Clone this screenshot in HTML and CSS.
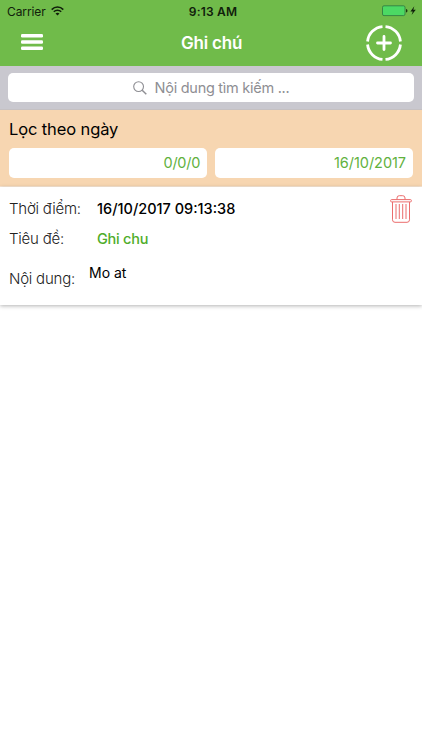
FILE: index.html
```html
<!DOCTYPE html>
<html lang="vi">
<head>
<meta charset="utf-8">
<title>Ghi chú</title>
<link rel="stylesheet" href="styles.css">
</head>
<body>
<header class="header">
  <div class="status">
    <div class="status-left">
      <span class="carrier">Carrier</span>
      <svg class="wifi" width="13" height="10" viewBox="0 0 13 10"><g fill="none" stroke="#10200b" stroke-width="1.6"><path d="M.7 3.6C4 .2 9 .2 12.3 3.6"/><path d="M2.8 5.8c2-2 5.4-2 7.4 0"/></g><path d="M4.500 7.400c1.200-1 2.800-1 4 0l-2 2.100z" fill="#10200b"/></svg>
    </div>
    <span class="clock">9:13 AM</span>
    <div class="status-right">
      <svg width="35" height="12" viewBox="0 0 35 12"><rect x=".5" y=".8" width="22.500" height="9.800" rx="1.500" fill="#4cd964" stroke="#2d7540" stroke-width=".8"/><path d="M24 4q1.500.2 1.500 1.700T24 7.400z" fill="#183510"/><path d="M32.300 1.300 28.400 6.500h2.400L29.600 10l4.200-5.300h-2.500z" fill="#10200b"/></svg>
    </div>
  </div>
  <nav class="navbar">
    <svg class="menu" width="22" height="16" viewBox="0 0 22 16"><g fill="#fff"><rect width="22" height="3.500" rx="1.200"/><rect y="6.200" width="22" height="3.500" rx="1.200"/><rect y="12.400" width="22" height="3.500" rx="1.200"/></g></svg>
    <h1 class="title">Ghi chú</h1>
    <svg class="add" width="36" height="36" viewBox="0 0 36 36"><g fill="none" stroke="#fff" stroke-width="2.800"><path d="M19.500 1.570A16.500 16.500 0 0 1 34.430 16.500M34.430 19.500A16.500 16.500 0 0 1 19.500 34.430M16.500 34.430A16.500 16.500 0 0 1 1.570 19.500M1.570 16.500A16.500 16.500 0 0 1 16.500 1.570"/><path d="M18 11.500v13M11.500 18h13" stroke-linecap="round"/></g></svg>
  </nav>
</header>
<div class="search">
  <div class="search-box">
    <svg width="14" height="14" viewBox="0 0 14 14" fill="none" stroke="#8e8e93" stroke-width="1.100"><circle cx="5.600" cy="5.600" r="4.900"/><path d="m9.200 9.200 4.100 4.100" stroke-width="1.500"/></svg>
    <span class="placeholder">Nội dung tìm kiếm ...</span>
  </div>
</div>
<section class="filter">
  <h2 class="filter-title">Lọc theo ngày</h2>
  <div class="dates">
    <div class="date"><span class="date-from">0/0/0</span></div>
    <div class="date"><span class="date-to">16/10/2017</span></div>
  </div>
</section>
<article class="note">
  <div class="fields">
    <div class="row"><span class="label label-time">Thời điểm:</span><span class="value time">16/10/2017 09:13:38</span></div>
    <div class="row"><span class="label label-title">Tiêu đề:</span><span class="value subject">Ghi chu</span></div>
    <div class="row row-body"><span class="label label-body">Nội dung:</span><span class="content">Mo at</span></div>
  </div>
  <svg class="trash" width="22" height="28" viewBox="0 0 22 28" fill="none" stroke="#eb6d6d" stroke-width="1"><rect x=".6" y="4.600" width="20.800" height="2.300" rx="1"/><path d="M7 4.500V3Q7 .7 9.300.7h3.400Q15 .7 15 3v1.500M2.500 7v17.800q0 2.500 2.500 2.500h12q2.500 0 2.500-2.500V7M6 9v15M9.300 9v15M12.700 9v15M16 9v15"/></svg>
</article>
</body>
</html>
```
FILE: styles.css
```css
* { box-sizing: border-box; }
body { margin: 0; min-height: 750px; background: #fff; color: #000; font-family: Inter, "Noto Sans", sans-serif; }
svg { display: block; flex: none; }
span, h1, h2 { white-space: nowrap; }
h1, h2 { margin: 0; }
.header { height: 66px; background: #70bb4a; }
.status { height: 22px; display: grid; grid-template-columns: 1fr auto 1fr; align-items: center; padding: 0 5px 0 7px; color: #10200b; font-size: 12px; }
.status-left { display: flex; align-items: center; gap: 5px; }
.carrier { letter-spacing: -.1px; }
.clock { font-weight: 600; letter-spacing: .2px; padding-left: 2px; }
.status-right { display: flex; justify-content: flex-end; }
.navbar { height: 44px; padding: 0 20px 0 21px; display: grid; grid-template-columns: 1fr auto 1fr; align-items: center; }
.title { color: #fff; font-size: 17px; font-weight: 600; line-height: 22px; letter-spacing: -.2px; margin-top: -2px; }
.menu { margin-top: -4px; }
.add { justify-self: end; margin-top: -3px; }
.search { height: 44px; background: #c9c8cf; border-bottom: 1px solid #c5c1c3; padding: 7px 8px 8px; }
.search-box { height: 29px; border-radius: 5px; background: #fff; color: #8e8e93; display: flex; align-items: center; justify-content: center; gap: 8px; font-size: 14.500px; }
.placeholder { letter-spacing: -.27px; }
.filter { height: 77px; background: #f7d6b1; padding: 8px 8px 0; border-bottom: 1px solid #fbe9d6; }
.filter-title { font-size: 16.500px; line-height: 22px; font-weight: 400; padding-left: 1px; letter-spacing: -.12px; }
.dates { display: grid; grid-template-columns: 198px 198px; gap: 8px; margin: 8px 0 0 1px; }
.date { height: 30px; border-radius: 5px; background: #fff; color: #61b13d; display: flex; justify-content: flex-end; align-items: center; padding: 0 7px 2px; font-size: 14.500px; }
.date-from { letter-spacing: -.3px; }
.date-to { letter-spacing: -.05px; }
.note { height: 118px; display: flex; justify-content: space-between; padding: 6px 10px 0 9px; background: #fff; box-shadow: 0 1px 4px rgba(0,0,0,.3); }
.row { display: flex; height: 30px; align-items: center; }
.label { width: 88px; font-size: 15px; font-weight: 300; color: #222; letter-spacing: -.22px; }
.value { font-size: 14.500px; font-weight: 500; }
.subject { color: #4fad2b; letter-spacing: -.25px; }
.row-body { height: 50px; }
.label-body { width: 80px; }
.content { font-size: 14px; margin-top: -12px; }
.trash { margin-top: 2px; }
```
